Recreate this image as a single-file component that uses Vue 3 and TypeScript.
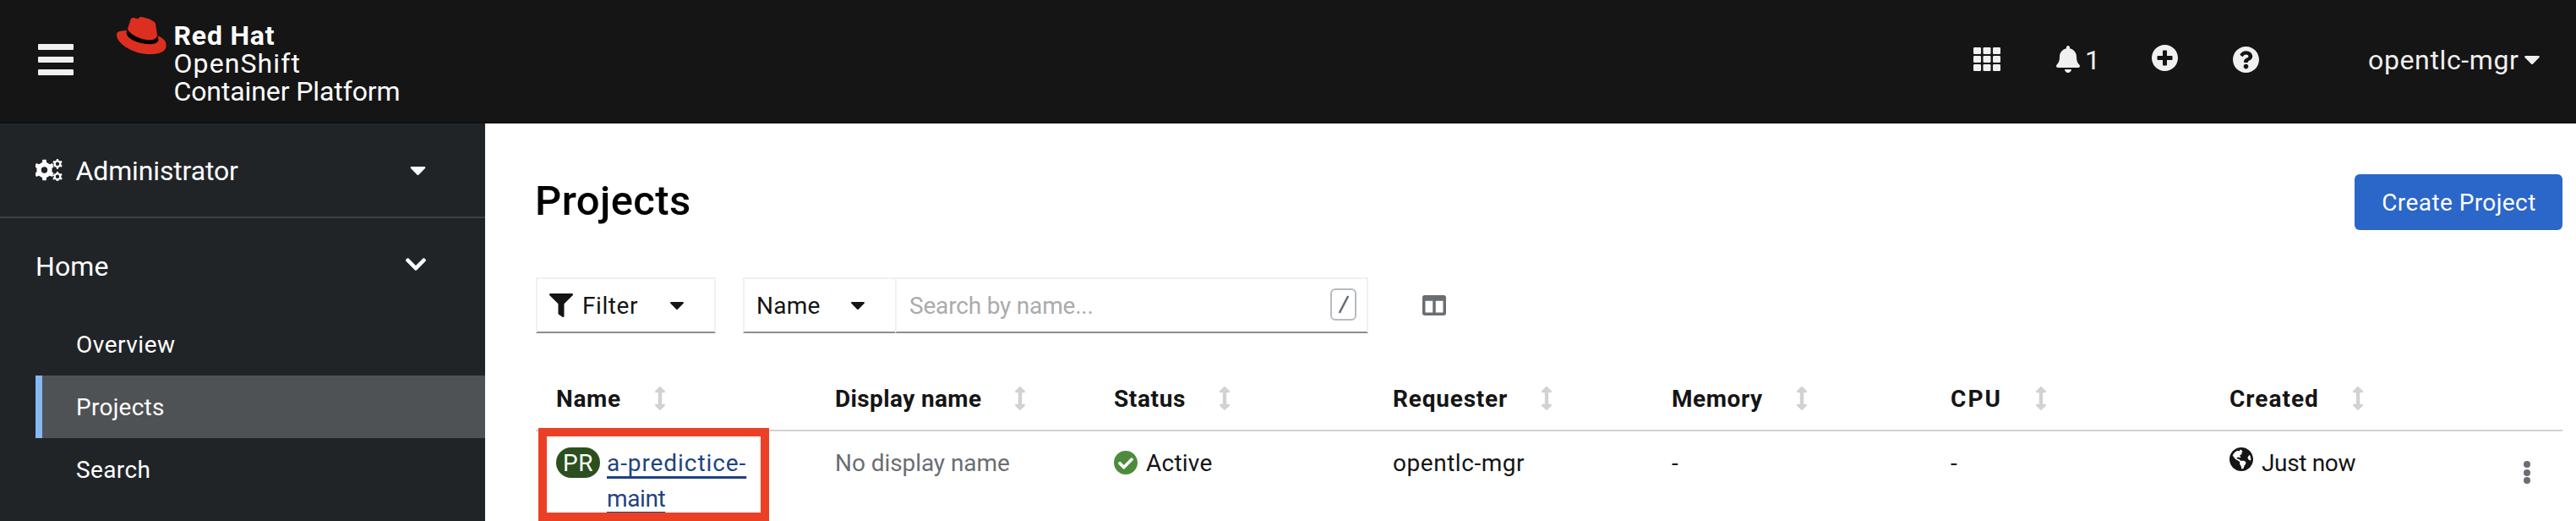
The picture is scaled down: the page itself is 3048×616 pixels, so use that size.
<script setup lang="ts">
interface Column {
  label: string
  tracking: number
}

const columns: Column[] = [
  { label: 'Name', tracking: 0.67 },
  { label: 'Display name', tracking: 0.37 },
  { label: 'Status', tracking: 0.63 },
  { label: 'Requester', tracking: 0.8 },
  { label: 'Memory', tracking: 0.56 },
  { label: 'CPU', tracking: 2.1 },
  { label: 'Created', tracking: 1 },
]

const navItems = [
  { label: 'Overview', tracking: 0.51, active: false },
  { label: 'Projects', tracking: 0.26, active: true },
  { label: 'Search', tracking: 0.38, active: false },
]

const gridCells = [0, 1, 2, 3, 4, 5, 6, 7, 8].map((n) => ({
  x: (n % 3) * 11.5,
  y: Math.floor(n / 3) * 10,
}))

// Outline of a toothed wheel with a round hole, for an even-odd fill.
function gear(cx: number, cy: number, outer: number, inner: number, hole: number, teeth: number): string {
  const step = (Math.PI * 2) / teeth
  const points: string[] = []
  for (let i = 0; i < teeth; i++) {
    const mid = i * step - Math.PI / 2
    const corners: [number, number][] = [
      [inner, -0.27],
      [outer, -0.17],
      [outer, 0.17],
      [inner, 0.27],
    ]
    for (const [radius, offset] of corners) {
      const angle = mid + offset * step
      points.push(`${(cx + radius * Math.cos(angle)).toFixed(2)} ${(cy + radius * Math.sin(angle)).toFixed(2)}`)
    }
  }
  const ring = `M${cx - hole} ${cy}a${hole} ${hole} 0 1 0 ${hole * 2} 0a${hole} ${hole} 0 1 0 ${-hole * 2} 0z`
  return `M${points.join('L')}z${ring}`
}

const gears = [gear(10.5, 13, 12.4, 9.3, 3.7, 6), gear(26, 5.8, 6, 4.5, 2.2, 6), gear(26, 20.8, 6, 4.5, 2.2, 6)].join('')
</script>

<template>
  <div class="app">
    <header class="masthead">
      <div class="burger"><i></i><i></i><i></i></div>
      <svg class="hat" viewBox="24 29 177 134" preserveAspectRatio="none">
        <path fill="#dc2f20" d="M62 76C50 80 24 76 24 93C24 124 84 162 142 162C176 162 200 153 200 131C200 112 186 102 168 95Z" />
        <path fill="#dc2f20" d="M61 78L73 40C76 29 85 31 98 36C102 37 103 29 110 29C126 31 146 38 157 46C164 51 163 62 165 72L170 108C158 126 90 122 61 78Z" />
        <path fill="#000" d="M62 72C59 78 57 90 63 97C76 116 114 126 143 126C158 126 168 122 172 113C173 106 171 98 168 95C165 108 153 112 136 111C108 109 75 95 62 72Z" />
      </svg>
      <div class="brand">
        <div class="brand-name">Red Hat</div>
        <div class="brand-product">OpenShift</div>
        <div class="brand-edition">Container Platform</div>
      </div>
      <div class="tools">
        <svg class="ic-grid" viewBox="0 0 32 28" preserveAspectRatio="none">
          <rect v-for="(c, i) in gridCells" :key="i" :x="c.x" :y="c.y" width="9" height="8" rx="1.2" fill="#f0f0f0" />
        </svg>
        <div class="alerts">
          <svg class="ic-bell" viewBox="0 0 448 512">
            <path fill="#f0f0f0" d="M224 512c35.32 0 63.97-28.65 63.97-64H160.03c0 35.35 28.65 64 63.97 64zm215.39-149.71c-19.32-20.76-55.47-51.99-55.47-154.29 0-77.7-54.48-139.9-127.94-155.16V32c0-17.67-14.32-32-31.98-32s-31.98 14.33-31.98 32v20.84C118.56 68.1 64.08 130.3 64.08 208c0 102.3-36.15 133.53-55.47 154.29-6 6.45-8.66 14.16-8.61 21.71.11 16.4 12.98 32 32.1 32h383.8c19.12 0 32-15.6 32.1-32 .05-7.55-2.61-15.27-8.61-21.71z" />
          </svg>
          <span>1</span>
        </div>
        <svg class="ic-plus" viewBox="8 8 496 496">
          <path fill="#f0f0f0" d="M256 8C119 8 8 119 8 256s111 248 248 248 248-111 248-248S393 8 256 8zm144 276c0 6.6-5.4 12-12 12h-92v92c0 6.6-5.4 12-12 12h-56c-6.6 0-12-5.4-12-12v-92h-92c-6.6 0-12-5.4-12-12v-56c0-6.6 5.4-12 12-12h92v-92c0-6.6 5.4-12 12-12h56c6.6 0 12 5.4 12 12v92h92c6.6 0 12 5.4 12 12v56z" />
        </svg>
        <svg class="ic-help" viewBox="8 8 496 496">
          <path fill="#f0f0f0" d="M504 256c0 136.997-111.043 248-248 248S8 392.997 8 256C8 119.083 119.043 8 256 8s248 111.083 248 248zM262.655 90c-54.497 0-89.255 22.957-116.549 63.758-3.536 5.286-2.353 12.415 2.715 16.258l34.699 26.31c5.205 3.947 12.621 3.008 16.665-2.122 17.864-22.658 30.113-35.797 57.303-35.797 20.429 0 45.698 13.148 45.698 32.958 0 14.976-12.363 22.667-32.534 33.976C247.128 238.528 216 254.941 216 296v4c0 6.627 5.373 12 12 12h56c6.627 0 12-5.373 12-12v-1.333c0-28.462 83.186-29.647 83.186-106.667 0-58.002-60.165-102-116.531-102zM256 338c-25.365 0-46 20.635-46 46 0 25.364 20.635 46 46 46s46-20.636 46-46c0-25.365-20.635-46-46-46z" />
        </svg>
        <div class="user">
          <span>opentlc-mgr</span>
          <svg class="caret" viewBox="11 192 298 169"><path d="M31.3 192h257.3c17.8 0 26.7 21.5 14.1 34.1L174.1 354.8c-7.8 7.8-20.5 7.8-28.3 0L17.2 226.1C4.6 213.5 13.5 192 31.3 192z" /></svg>
        </div>
      </div>
    </header>

    <div class="body">
      <nav class="sidebar">
        <div class="perspective">
          <svg class="ic-gears" viewBox="0 0 32 26"><path fill="#fff" fill-rule="evenodd" :d="gears" /></svg>
          <span>Administrator</span>
          <svg class="caret" viewBox="11 192 298 169"><path d="M31.3 192h257.3c17.8 0 26.7 21.5 14.1 34.1L174.1 354.8c-7.8 7.8-20.5 7.8-28.3 0L17.2 226.1C4.6 213.5 13.5 192 31.3 192z" /></svg>
        </div>
        <div class="section">
          <span>Home</span>
          <svg class="chevron" viewBox="5 123 438 266"><path fill="#fff" d="M207.029 381.476L12.686 187.132c-9.373-9.373-9.373-24.569 0-33.941l22.667-22.667c9.357-9.357 24.522-9.375 33.901-.04L224 284.505l154.745-154.021c9.379-9.335 24.544-9.317 33.901.04l22.667 22.667c9.373 9.373 9.373 24.569 0 33.941L240.971 381.476c-9.373 9.372-24.569 9.372-33.942 0z" /></svg>
        </div>
        <div v-for="item in navItems" :key="item.label" class="nav-item" :class="{ active: item.active }">
          <span :style="{ letterSpacing: item.tracking + 'px' }">{{ item.label }}</span>
        </div>
      </nav>

      <main class="content">
        <div class="title-row">
          <h1>Projects</h1>
          <button class="create">Create Project</button>
        </div>

        <div class="toolbar">
          <div class="control filter">
            <svg class="ic-funnel" viewBox="0 0 512 512" preserveAspectRatio="none"><path fill="#151515" d="M487.976 0H24.028C2.71 0-8.047 25.866 7.058 40.971L192 225.941V432c0 7.831 3.821 15.17 10.237 19.662l80 55.98C298.02 518.69 320 507.493 320 487.98V225.941l184.947-184.97C520.021 25.896 509.338 0 487.976 0z" /></svg>
            <span>Filter</span>
            <svg class="caret" viewBox="11 192 298 169"><path d="M31.3 192h257.3c17.8 0 26.7 21.5 14.1 34.1L174.1 354.8c-7.8 7.8-20.5 7.8-28.3 0L17.2 226.1C4.6 213.5 13.5 192 31.3 192z" /></svg>
          </div>
          <div class="control by">
            <span>Name</span>
            <svg class="caret" viewBox="11 192 298 169"><path d="M31.3 192h257.3c17.8 0 26.7 21.5 14.1 34.1L174.1 354.8c-7.8 7.8-20.5 7.8-28.3 0L17.2 226.1C4.6 213.5 13.5 192 31.3 192z" /></svg>
          </div>
          <div class="control search">
            <span>Search by name...</span>
            <kbd>
              <svg viewBox="0 0 14 22"><path d="M12.2 1L1.8 21" stroke="#6a6e73" stroke-width="2.6" /></svg>
            </kbd>
          </div>
          <svg class="ic-columns" viewBox="0 32 512 448" preserveAspectRatio="none"><path fill="#6a6e73" d="M464 32H48C21.49 32 0 53.49 0 80v352c0 26.51 21.49 48 48 48h416c26.51 0 48-21.49 48-48V80c0-26.51-21.49-48-48-48zM224 416H64V160h160v256zm224 0H288V160h160v256z" /></svg>
        </div>

        <div class="row head">
          <div v-for="col in columns" :key="col.label" class="th">
            <span :style="{ letterSpacing: col.tracking + 'px' }">{{ col.label }}</span>
            <svg class="sort" viewBox="18 0 220 512" preserveAspectRatio="none"><path fill="#d2d2d2" d="M214.059 377.941H168V134.059h46.059c21.382 0 32.09-25.851 16.971-40.971L144.971 7.029c-9.373-9.373-24.568-9.373-33.941 0L24.971 93.088c-15.119 15.119-4.411 40.971 16.971 40.971H88v243.882H41.941c-21.382 0-32.09 25.851-16.971 40.971l86.059 86.059c9.373 9.373 24.568 9.373 33.941 0l86.059-86.059c15.12-15.119 4.412-40.971-16.97-40.971z" /></svg>
          </div>
        </div>

        <div class="row data">
          <div class="td name">
            <span class="badge">PR</span>
            <a><span class="l1">a-predictice-</span><br /><span class="l2">maint</span></a>
            <div class="highlight"></div>
          </div>
          <div class="td muted">No display name</div>
          <div class="td status">
            <svg class="ic-check" viewBox="8 8 496 496"><path fill="#4f8a3d" d="M504 256c0 136.967-111.033 248-248 248S8 392.967 8 256 119.033 8 256 8s248 111.033 248 248zM227.314 387.314l184-184c6.248-6.248 6.248-16.379 0-22.627l-22.627-22.627c-6.248-6.249-16.379-6.249-22.628 0L216 308.118l-70.059-70.059c-6.248-6.248-16.379-6.248-22.628 0l-22.627 22.627c-6.248 6.248-6.248 16.379 0 22.627l104 104c6.249 6.249 16.379 6.249 22.628.001z" /></svg>
            <span>Active</span>
          </div>
          <div class="td requester">opentlc-mgr</div>
          <div class="td dash">-</div>
          <div class="td dash">-</div>
          <div class="td created">
            <svg class="ic-globe" viewBox="0 8 496 496"><path fill="#151515" d="M248 8C111.03 8 0 119.03 0 256s111.03 248 248 248 248-111.03 248-248S384.97 8 248 8zm82.29 357.6c-3.9 3.88-7.99 7.95-11.31 11.28-2.99 3-5.1 6.7-6.17 10.71-1.51 5.66-2.73 11.38-4.77 16.87l-17.39 46.85c-13.76 3-28 4.69-42.65 4.69v-27.38c1.69-12.62-7.64-36.26-22.63-51.25-6-6-9.37-14.14-9.37-22.63v-32.01c0-11.64-6.27-22.34-16.46-27.97-14.37-7.95-34.81-19.06-48.81-26.11-11.48-5.78-22.1-13.14-31.65-21.75l-.8-.72a114.792 114.792 0 0 1-18.06-20.74c-9.38-13.77-24.66-36.42-34.59-51.14 20.47-45.5 57.36-82.04 103.2-101.89l24.01 12.01C203.48 89.74 216 82.01 216 70.11v-11.3c7.99-1.29 16.12-2.11 24.39-2.42l28.3 28.3c6.25 6.25 6.25 16.38 0 22.63L264 112l-10.34 10.34c-3.12 3.12-3.12 8.19 0 11.31l4.69 4.69c3.12 3.12 3.12 8.19 0 11.31l-8 8a8.008 8.008 0 0 1-5.66 2.34h-8.99c-2.08 0-4.08.81-5.58 2.27l-9.92 9.65a8.008 8.008 0 0 0-1.58 9.31l15.59 31.19c2.66 5.32-1.21 11.58-7.15 11.58h-5.64c-1.93 0-3.79-.7-5.24-1.96l-9.28-8.06a16.017 16.017 0 0 0-15.55-3.1l-31.17 10.39a11.95 11.95 0 0 0-8.17 11.34c0 4.53 2.56 8.66 6.61 10.69l11.08 5.54c9.41 4.71 19.79 7.16 30.31 7.16s22.59 27.29 32 32h66.75c8.49 0 16.62 3.37 22.63 9.37l13.69 13.69a30.503 30.503 0 0 1 8.93 21.57 46.536 46.536 0 0 1-13.72 32.98zM417 274.25c-5.79-1.45-10.84-5-14.15-9.97l-17.98-26.97a23.97 23.97 0 0 1 0-26.62l19.59-29.38c2.32-3.47 5.5-6.29 9.24-8.15l12.98-6.49C440.2 193.59 448 223.87 448 256c0 8.67-.74 17.16-1.82 25.54L417 274.25z" /></svg>
            <span>Just now</span>
          </div>
          <div class="kebab"><i></i><i></i><i></i></div>
        </div>
      </main>
    </div>
  </div>
</template>

<style>
body {
  margin: 0;
  background: #fff;
}
</style>

<style scoped>
.app {
  width: 3048px;
  height: 616px;
  overflow: hidden;
  display: flex;
  flex-direction: column;
  font-family: Roboto, 'Open Sans', sans-serif;
  font-size: 28px;
  line-height: 42px;
  color: #151515;
  white-space: nowrap;
}
svg {
  display: block;
  flex: none;
}
.caret {
  width: 18px;
  height: 10px;
  fill: currentColor;
}

.masthead {
  box-sizing: border-box;
  flex: none;
  height: 146px;
  padding: 0 43px 0 45px;
  display: flex;
  align-items: flex-start;
  background: #151515;
  border-bottom: 2px solid #100f12;
  color: #f0f0f0;
}
.burger {
  width: 42px;
  margin-top: 51.5px;
  display: flex;
  flex-direction: column;
  gap: 8px;
}
.burger i {
  height: 7px;
  border-radius: 1px;
  background: #f0f0f0;
}
.hat {
  width: 59px;
  height: 44.5px;
  margin: 19.5px 0 0 51px;
}
.brand {
  margin: 25.5px 0 0 8.5px;
  font-size: 32px;
  line-height: 33.4px;
  color: #fff;
}
.brand-name {
  font-weight: 700;
  letter-spacing: 0.8px;
}
.brand-product {
  letter-spacing: 1.1px;
}
.brand-edition {
  letter-spacing: -0.11px;
}
.tools {
  height: 140px;
  margin-left: auto;
  display: grid;
  grid-template-columns: 98px 113px 95.5px 160.5px 203px;
  align-items: center;
  font-size: 32px;
}
.ic-grid {
  width: 32px;
  height: 28px;
}
.alerts {
  display: flex;
  align-items: center;
  gap: 6px;
}
.alerts span {
  padding-top: 2px;
  width: 14px;
}
.ic-bell {
  width: 28px;
  height: 32px;
}
.ic-plus,
.ic-help {
  width: 31px;
  height: 31px;
}
.ic-plus {
  margin-top: -4px;
}
.user {
  display: flex;
  align-items: center;
  justify-content: space-between;
  padding-top: 2px;
  letter-spacing: 0.63px;
}

.body {
  flex: 1;
  display: flex;
  min-height: 0;
}
.sidebar {
  flex: none;
  width: 574px;
  background: #212427;
  color: #fff;
}
.perspective,
.section {
  box-sizing: border-box;
  display: flex;
  align-items: center;
  padding: 1px 70px 0 42px;
  font-size: 32px;
}
.perspective {
  height: 112px;
  border-bottom: 2px solid #3c3f42;
  letter-spacing: -0.14px;
}
.perspective span {
  margin-left: 15.5px;
}
.perspective .caret,
.section .chevron {
  margin-left: auto;
}
.perspective .caret {
  width: 19px;
}
.ic-gears {
  width: 32px;
  height: 26px;
  margin-top: -2px;
}
.section {
  height: 112px;
  padding-top: 2px;
  letter-spacing: 0.12px;
}
.chevron {
  width: 24px;
  height: 15px;
  margin-top: -5px;
}
.nav-item {
  box-sizing: border-box;
  height: 74px;
  margin-left: 42px;
  padding: 2px 0 0 40px;
  border-left: 8px solid transparent;
  display: flex;
  align-items: center;
}
.nav-item.active {
  background: #4f5255;
  border-left-color: #86b8f2;
}

.content {
  flex: 1;
  padding: 60px 16px 0 60px;
}
.title-row {
  height: 66px;
  display: flex;
  align-items: center;
  justify-content: space-between;
}
h1 {
  margin: -2px 0 0 -1px;
  font-size: 49px;
  line-height: 60px;
  font-weight: 500;
  letter-spacing: 0.4px;
  color: #000;
}
.create {
  width: 246px;
  height: 66px;
  padding: 1px 0 0 1px;
  border: 0;
  border-radius: 6px;
  background: #2b66c9;
  color: #fff;
  font: inherit;
  letter-spacing: 0.42px;
}
.toolbar {
  height: 66px;
  margin-top: 56px;
  display: flex;
  align-items: center;
}
.control {
  box-sizing: border-box;
  height: 66px;
  display: flex;
  align-items: center;
  border: 2px solid #f0f0f0;
  border-bottom-color: #8a8d90;
}
.control span {
  padding-top: 2px;
}
.filter {
  width: 213px;
  padding: 0 36px 0 14px;
  letter-spacing: 0.58px;
}
.filter span {
  margin-left: 11px;
}
.control .caret {
  width: 16px;
  height: 9px;
  margin-left: auto;
}
.ic-funnel {
  width: 28px;
  height: 28px;
}
.by {
  width: 180px;
  margin-left: 32px;
  padding: 0 36px 0 14px;
  letter-spacing: 0.25px;
  border-right: 0;
}
.search {
  width: 560px;
  padding: 0 12px 0 15px;
  justify-content: space-between;
  color: #aaabac;
  letter-spacing: -0.19px;
}
kbd {
  box-sizing: border-box;
  width: 31px;
  height: 38px;
  margin-top: -3px;
  border: 2px solid #b8bbbe;
  border-radius: 6px;
  display: flex;
  align-items: center;
  justify-content: center;
}
kbd svg {
  width: 14px;
  height: 22px;
}
.ic-columns {
  width: 28px;
  height: 24px;
  margin-left: 64px;
}

.row {
  display: grid;
  grid-template-columns: repeat(7, 330px) 1fr;
  padding-left: 24px;
}
.head {
  height: 74px;
  margin-top: 40px;
  border-bottom: 2px solid #d2d2d2;
  align-items: center;
  font-weight: 700;
}
.th {
  display: flex;
  align-items: center;
}
.th span {
  padding-top: 1px;
}
.sort {
  width: 12px;
  height: 28px;
  margin-left: 40px;
}
.data {
  padding-top: 17px;
}
.name {
  position: relative;
  display: flex;
  align-items: flex-start;
}
.badge {
  width: 52px;
  height: 36px;
  margin: 2px 8px 0 0;
  border-radius: 18px;
  background: #2b4f1f;
  color: #fff;
  text-align: center;
  line-height: 37px;
  letter-spacing: 0.6px;
}
.name a {
  color: #1f4380;
  text-decoration: underline;
  text-decoration-thickness: 3px;
  text-underline-offset: 6px;
}
.l1 {
  letter-spacing: 0.92px;
}
.l2 {
  letter-spacing: -0.4px;
}
.highlight {
  box-sizing: border-box;
  position: absolute;
  left: -21px;
  top: -21px;
  width: 273px;
  height: 110px;
  border: 10px solid #ec4026;
}
.muted {
  color: #6a6e73;
  letter-spacing: -0.07px;
}
.status,
.created {
  display: flex;
  align-items: flex-start;
}
.status {
  letter-spacing: 0.24px;
}
.ic-check {
  width: 28px;
  height: 28px;
  margin: 6px 10px 0 0;
}
.requester {
  letter-spacing: 0.54px;
}
.ic-globe {
  width: 28px;
  height: 28px;
  margin: 2px 10px 0 0;
}
.created {
  letter-spacing: -0.34px;
}
.kebab {
  display: flex;
  flex-direction: column;
  align-items: flex-end;
  gap: 1.7px;
  padding: 18px 38px 0 0;
}
.kebab i {
  width: 8px;
  height: 8px;
  border-radius: 50%;
  background: #6a6e73;
}
</style>
